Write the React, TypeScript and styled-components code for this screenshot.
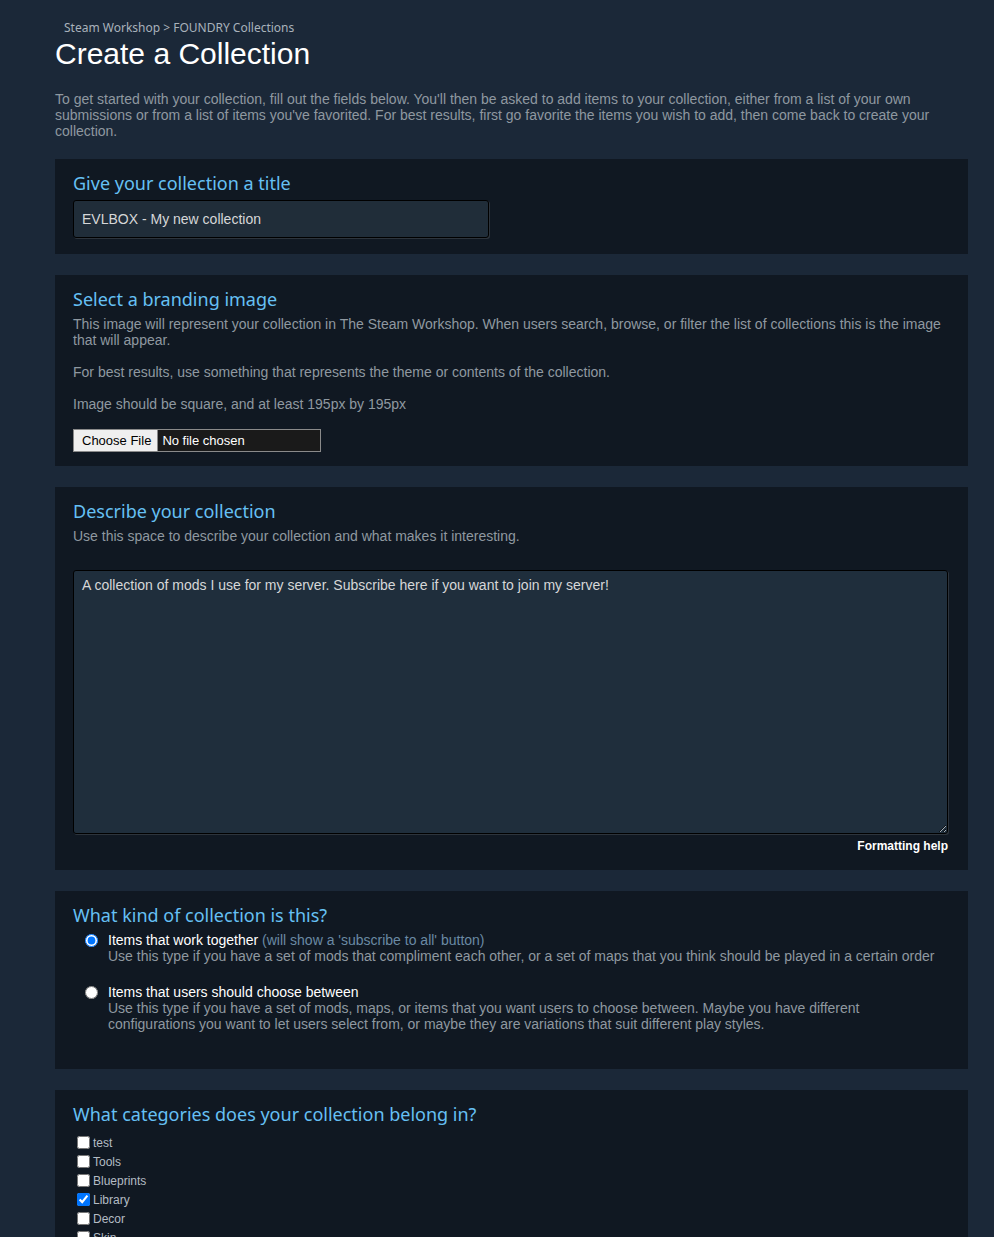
import React from "react";
import styled, { createGlobalStyle } from "styled-components";

const HEAD_FONT = `"Noto Sans", "Open Sans", Arial, sans-serif`;
const BODY_FONT = `"Liberation Sans", Arial, sans-serif`;

const GlobalStyle = createGlobalStyle`
  html, body {
    margin: 0;
    padding: 0;
    background: #1b2838;
  }
  body {
    font-family: ${BODY_FONT};
    color: #8f98a0;
  }
`;

const Page = styled.div`
  width: 913px;
  margin-left: 55px;
  padding-top: 20px;
  padding-bottom: 40px;
`;

const Breadcrumb = styled.div`
  font-family: ${HEAD_FONT};
  font-size: 12px;
  color: #a9b2bb;
  padding-left: 9px;
  line-height: 16px;
`;

const PageTitle = styled.h1`
  margin: 0;
  font-family: ${BODY_FONT};
  font-weight: 400;
  font-size: 30px;
  line-height: 36px;
  color: #ffffff;
`;

const Intro = styled.p`
  margin: 19px 0 20px;
  font-size: 14px;
  line-height: 16px;
  color: #8f98a0;
  padding-right: 30px;
`;

const Panel = styled.section<{ $pb?: number }>`
  background: #101822;
  padding: 12px 18px ${(p) => p.$pb ?? 18}px;
  margin-bottom: 21px;
`;

const Heading = styled.h2`
  margin: 0 0 5px;
  font-family: ${HEAD_FONT};
  font-weight: 400;
  font-size: 18px;
  line-height: 24px;
  color: #66c0f4;
`;

const Text = styled.p<{ $mt?: number }>`
  margin: ${(p) => p.$mt ?? 0}px 0 0;
  font-size: 14px;
  line-height: 16px;
  color: #8f98a0;
`;

const TitleInput = styled.input`
  display: block;
  box-sizing: border-box;
  width: 416px;
  height: 38px;
  padding: 0 8px;
  background: #202d39;
  border: 1px solid #000;
  border-radius: 3px;
  box-shadow: 1px 1px 0 rgba(255, 255, 255, 0.12);
  color: #d6d7d8;
  font-family: ${BODY_FONT};
  font-size: 14px;
  outline: none;
`;

const FileRow = styled.div`
  margin-top: 17px;
  display: flex;
  width: 248px;
  height: 23px;
  box-sizing: border-box;
  border: 1px solid #8a8a8a;
  background: #1a1a1a;
`;

const FileButton = styled.span`
  display: flex;
  align-items: center;
  padding: 0 6px 0 8px;
  background: #efefef;
  color: #000;
  font-size: 13px;
  border-right: 1px solid #8a8a8a;
`;

const FileLabel = styled.span`
  display: flex;
  align-items: center;
  padding-left: 4px;
  color: #fff;
  font-size: 13px;
`;

const DescArea = styled.textarea`
  display: block;
  box-sizing: border-box;
  margin-top: 26px;
  width: 875px;
  height: 264px;
  padding: 6px 8px;
  background: #1f2e3c;
  border: 1px solid #000;
  border-radius: 3px;
  box-shadow: 1px 1px 0 rgba(255, 255, 255, 0.12);
  color: #d6d7d8;
  font-family: ${BODY_FONT};
  font-size: 14px;
  line-height: 16px;
  resize: vertical;
  outline: none;
`;

const HelpLink = styled.div`
  margin-top: 5px;
  text-align: right;
  font-size: 12px;
  font-weight: 700;
  color: #ffffff;
  padding-right: 2px;
`;

const RadioList = styled.div`
  padding-left: 10px;
  padding-bottom: 20px;
`;

const RadioRow = styled.label<{ $mt?: number }>`
  display: grid;
  grid-template-columns: 25px 1fr;
  margin-top: ${(p) => p.$mt ?? 0}px;
  font-size: 14px;
  line-height: 16px;

  input {
    margin: 2px 0 0 2px;
    width: 13px;
    height: 13px;
  }
`;

const RadioLabel = styled.span`
  color: #ffffff;
`;

const RadioHint = styled.span`
  color: #6a8aa4;
`;

const RadioDesc = styled.div`
  color: #8f98a0;
`;

const CheckList = styled.div`
  padding: 2px 0 0 3px;
`;

const CheckRow = styled.label`
  display: flex;
  align-items: center;
  height: 19px;
  font-size: 12px;
  color: #b4bcc4;

  input {
    margin: 0 3px 0 1px;
    width: 13px;
    height: 13px;
  }
`;

const categories = [
  { name: "test", checked: false },
  { name: "Tools", checked: false },
  { name: "Blueprints", checked: false },
  { name: "Library", checked: true },
  { name: "Decor", checked: false },
  { name: "Skin", checked: false },
  { name: "Other", checked: false },
];

const App: React.FC = () => {
  return (
    <>
      <GlobalStyle />
      <Page>
        <Breadcrumb>Steam Workshop &gt; FOUNDRY Collections</Breadcrumb>
        <PageTitle>Create a Collection</PageTitle>
        <Intro>
          To get started with your collection, fill out the fields below. You'll then be asked to add items to your
          collection, either from a list of your own submissions or from a list of items you've favorited. For best
          results, first go favorite the items you wish to add, then come back to create your collection.
        </Intro>

        <Panel $pb={16}>
          <Heading>Give your collection a title</Heading>
          <TitleInput defaultValue="EVLBOX - My new collection" />
        </Panel>

        <Panel $pb={14}>
          <Heading>Select a branding image</Heading>
          <Text>
            This image will represent your collection in The Steam Workshop. When users search, browse, or filter the
            list of collections this is the image that will appear.
          </Text>
          <Text $mt={16}>For best results, use something that represents the theme or contents of the collection.</Text>
          <Text $mt={16}>Image should be square, and at least 195px by 195px</Text>
          <FileRow>
            <FileButton>Choose File</FileButton>
            <FileLabel>No file chosen</FileLabel>
          </FileRow>
        </Panel>

        <Panel $pb={17}>
          <Heading>Describe your collection</Heading>
          <Text>Use this space to describe your collection and what makes it interesting.</Text>
          <DescArea defaultValue="A collection of mods I use for my server. Subscribe here if you want to join my server!" />
          <HelpLink>Formatting help</HelpLink>
        </Panel>

        <Panel $pb={17}>
          <Heading>What kind of collection is this?</Heading>
          <RadioList>
            <RadioRow>
              <input type="radio" name="kind" defaultChecked />
              <div>
                <RadioLabel>Items that work together</RadioLabel> <RadioHint>(will show a 'subscribe to all' button)</RadioHint>
                <RadioDesc>
                  Use this type if you have a set of mods that compliment each other, or a set of maps that you think
                  should be played in a certain order
                </RadioDesc>
              </div>
            </RadioRow>
            <RadioRow $mt={20}>
              <input type="radio" name="kind" />
              <div>
                <RadioLabel>Items that users should choose between</RadioLabel>
                <RadioDesc>
                  Use this type if you have a set of mods, maps, or items that you want users to choose between. Maybe
                  you have different configurations you want to let users select from, or maybe they are variations that
                  suit different play styles.
                </RadioDesc>
              </div>
            </RadioRow>
          </RadioList>
        </Panel>

        <Panel>
          <Heading>What categories does your collection belong in?</Heading>
          <CheckList>
            {categories.map((c) => (
              <CheckRow key={c.name}>
                <input type="checkbox" defaultChecked={c.checked} />
                {c.name}
              </CheckRow>
            ))}
          </CheckList>
        </Panel>
      </Page>
    </>
  );
};

export default App;
